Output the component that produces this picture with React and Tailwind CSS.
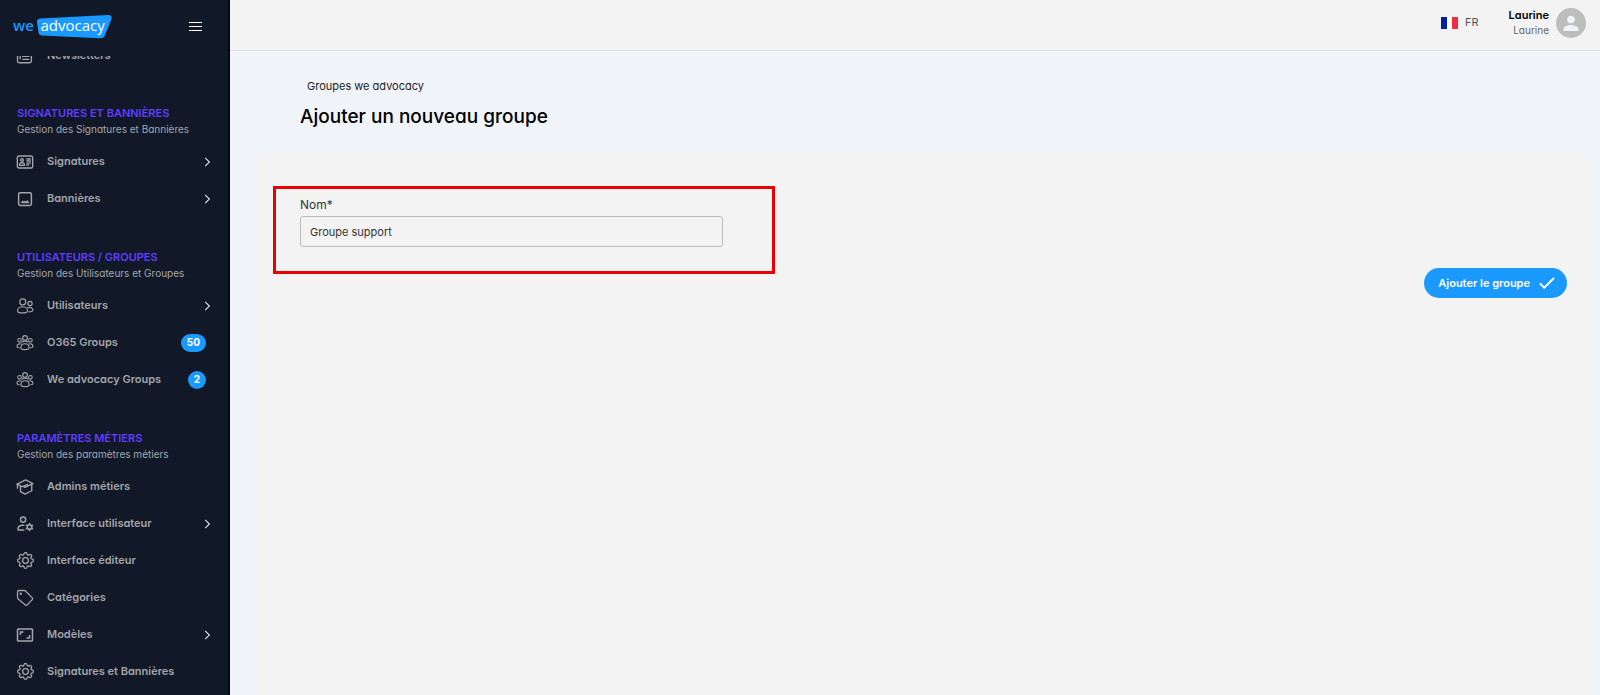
import { useState } from "react";
import { BsGear } from "react-icons/bs";
import { MdOutlineAspectRatio } from "react-icons/md";

function Stroke({ children, width = 1.5 }) {
  return (
    <svg viewBox="0 0 24 24" className="size-[18px]" fill="none" stroke="currentColor" strokeWidth={width} strokeLinecap="round" strokeLinejoin="round" aria-hidden="true">
      {children}
    </svg>
  );
}

const IdCard = () => (
  <Stroke width={1.8}>
    <rect x="1.8" y="4" width="20.4" height="16" rx="2" />
    <circle cx="8" cy="9.3" r="1.8" />
    <path d="M4.8 16.5v-.8c0-1.8 1.2-2.7 3.2-2.7s3.2.9 3.2 2.7v.8z" />
    <path d="M14.5 8h4.6M14.5 10.7h4.6M14.5 13.4h4.6M14.5 16h2.4" />
  </Stroke>
);

const Picture = () => (
  <Stroke width={2}>
    <rect x="3.5" y="3.5" width="17" height="17" rx="1.8" />
    <path d="M6.5 17.3l2.3-3.2 1.8 1.6 1.2-1.4 1.4 1.5 2-2.4 2.3 3.9z" fill="currentColor" strokeWidth=".4" />
  </Stroke>
);

const TwoUsers = () => (
  <Stroke width={1.6}>
    <circle cx="9" cy="6.5" r="4" />
    <circle cx="18.7" cy="8.7" r="2.8" />
    <path d="M2 18.2c0-3 3-5.2 6.7-5.2s6.7 2.2 6.7 5.2c0 2-1.6 3-6.7 3s-6.7-1-6.7-3z" />
    <path d="M15.500 14.400c3.600-1.400 7 .5 7 3 0 1.700-1.500 2.400-5.200 2.400" />
  </Stroke>
);

const ThreeUsers = () => (
  <Stroke width={1.5}>
    <circle cx="12" cy="5.3" r="3.100" />
    <circle cx="4.800" cy="8.400" r="2.400" />
    <circle cx="19.200" cy="8.400" r="2.400" />
    <path d="M6.500 18.300c0-3.200 2.300-5.300 5.500-5.300s5.500 2.100 5.500 5.300c0 1.800-1.500 2.600-5.500 2.600s-5.500-.8-5.500-2.600z" />
    <path d="M8 10.800c1-1 2.400-1.300 4-1.300s3 .3 4 1.300" />
    <path d="M6.800 13.300c-3-.8-5.500.7-5.500 3 0 1.300 1 2 3 2.100M17.200 13.300c3-.8 5.500.7 5.500 3 0 1.300-1 2-3 2.100" />
  </Stroke>
);

const Cap = () => (
  <Stroke width={1.8}>
    <path d="M1.500 8.200L13 2.500l9.500 5-10.500 5-2.500-1.300 6-2.700" />
    <path d="M1.500 8.200l4.500 2v8l6 3.300 9-4.500V8.500" />
    <path d="M2 8.500v5M6 11.500l3.500-.3" />
  </Stroke>
);

const UserCog = () => (
  <Stroke width={2}>
    <circle cx="9.500" cy="6" r="3.500" />
    <path d="M10.500 20H2.800v-2c0-2.800 2.700-4.500 6.700-4.500h1" />
    <circle cx="18" cy="16" r="3.100" />
    <path d="M18 11.300v1.400M18 19.300v1.400M13.900 13.600l1.300.8M20.800 17.600l1.300.8M13.900 18.400l1.300-.8M20.800 14.400l1.300-.8" />
  </Stroke>
);

const News = () => (
  <Stroke width={1.8}>
    <path d="M5.500 15.500V4h15v14.500a2.500 2.500 0 0 1-2.500 2.500H4.500A2.500 2.500 0 0 1 2 18.500V9h3.500" />
    <path d="M9 8.500h8M9 12.500h8M9 16.500h8" />
  </Stroke>
);

const Tag = () => (
  <Stroke width={1.7}>
    <path d="M2 3.500A1.500 1.500 0 0 1 3.500 2H11q1 0 1.700.7l9 9.200q1 1.100 0 2.200l-7 7.200q-1.100 1-2.200 0L2.700 13Q2 12.300 2 11.300z" />
    <circle cx="6.300" cy="6.300" r=".8" />
  </Stroke>
);

const Gear = () => <BsGear className="size-[17px]" stroke="currentColor" strokeWidth=".3" aria-hidden="true" />;
const Ratio = () => <MdOutlineAspectRatio className="size-[18px]" aria-hidden="true" />;

const sections = [
  { items: [{ label: "Newsletters", icon: News }] },
  {
    title: "Signatures et Bannières",
    text: "Gestion des Signatures et Bannières",
    items: [
      { label: "Signatures", icon: IdCard, more: true },
      { label: "Bannières", icon: Picture, more: true },
    ],
  },
  {
    title: "Utilisateurs / Groupes",
    text: "Gestion des Utilisateurs et Groupes",
    items: [
      { label: "Utilisateurs", icon: TwoUsers, more: true },
      { label: "O365 Groups", icon: ThreeUsers, badge: 50 },
      { label: "We advocacy Groups", icon: ThreeUsers, badge: 2 },
    ],
  },
  {
    title: "Paramètres métiers",
    text: "Gestion des paramètres métiers",
    items: [
      { label: "Admins métiers", icon: Cap },
      { label: "Interface utilisateur", icon: UserCog, more: true },
      { label: "Interface éditeur", icon: Gear },
      { label: "Catégories", icon: Tag },
      { label: "Modèles", icon: Ratio, more: true },
      { label: "Signatures et Bannières", icon: Gear },
    ],
  },
];

function NavItem({ label, icon: Icon, more, badge }) {
  return (
    <li>
      <a href="#" className="flex h-[37px] items-center pr-[17px] pl-4 text-[11px] font-semibold text-[#a3a5aa]">
        <span className="flex w-[18px] justify-center">
          <Icon />
        </span>
        <span className="ml-[13px] flex-1">{label}</span>
        {more && (
          <svg viewBox="0 0 7 10" className="h-[10px] w-[7px]" fill="none" stroke="#e5e5e5" strokeWidth="1.1" aria-hidden="true">
            <path d="M1.200 .8L5.400 5 1.200 9.200" />
          </svg>
        )}
        {badge && (
          <span className="mr-[5px] flex h-[18px] items-center rounded-full bg-[#1a99ff] px-[6px] text-[10px] font-bold text-white">
            {badge}
          </span>
        )}
      </a>
    </li>
  );
}

function Sidebar() {
  return (
    <aside className="flex w-[230px] shrink-0 flex-col border-r-2 border-[#05070b] bg-[#111827]">
      <div className="flex h-14 shrink-0 items-center justify-between pr-[26px] pb-[3px] pl-[13px]">
        <a href="#" aria-label="we advocacy">
          <svg viewBox="0 0 100 26" className="h-[26px] w-[100px]" fontFamily="'Open Sans', sans-serif" aria-hidden="true">
            <path d="M27 4.500Q23.500 5 24 8.500l1.500 10q.5 3 3.500 3.100l58 2.700q4 .2 5-3.300L98.500 5Q99.500 1 95 1z" fill="#1a99ff" />
            <text x="0" y="17" fill="#1a99ff" fontSize="15" fontWeight="600">we</text>
            <text x="27.500" y="17" fill="#fff" fontSize="15" fontWeight="500">advocacy</text>
          </svg>
        </a>
        <button type="button" aria-label="Menu" className="flex w-[13px] flex-col gap-[3px]">
          <span className="h-px w-full bg-white" />
          <span className="h-px w-full bg-white" />
          <span className="h-px w-full bg-white" />
        </button>
      </div>
      <nav className="min-h-0 flex-1 overflow-hidden">
        <div className="-mt-[19px] flex flex-col gap-8">
          {sections.map((section, i) => (
            <section key={i} className="first:-mb-px">
              {section.title && (
                <div className="px-[17px] pb-[6px]">
                  <h2 className="text-[11px] leading-4 font-semibold text-[#5f3dff] uppercase">{section.title}</h2>
                  <p className="text-[10px] leading-4 text-[#a3a7ad]">{section.text}</p>
                </div>
              )}
              <ul>
                {section.items.map((item) => (
                  <NavItem key={item.label} {...item} />
                ))}
              </ul>
            </section>
          ))}
        </div>
      </nav>
    </aside>
  );
}

function Header() {
  return (
    <header className="flex h-[51px] shrink-0 items-center justify-end border-b border-[#dfe1e4] bg-[#f3f3f3] pr-[14px] pb-[5px]">
      <button type="button" className="mr-[30px] flex items-center gap-[7px] text-[11px] text-[#555]">
        <svg viewBox="0 0 17 12" className="h-3 w-[17px]" aria-hidden="true">
          <path d="M0 0h6v12H0z" fill="#00209f" />
          <path d="M6 0h5v12H6z" fill="#fff" />
          <path d="M11 0h6v12h-6z" fill="#f42a41" />
        </svg>
        FR
      </button>
      <div className="mr-[7px] text-right">
        <p className="text-[11px] leading-[15px] font-semibold text-black">Laurine</p>
        <p className="text-[10px] leading-[15px] text-[#666]">Laurine</p>
      </div>
      <svg viewBox="0 0 30 30" className="size-[30px]" role="img" aria-label="Laurine">
        <circle cx="15" cy="15" r="15" fill="#bdbdbd" />
        <circle cx="15" cy="11.500" r="3.800" fill="#f0f4f9" />
        <path d="M7.500 23v-2c0-2.700 5-4 7.500-4s7.500 1.300 7.500 4v2z" fill="#f0f4f9" />
      </svg>
    </header>
  );
}

export default function App() {
  const [name, setName] = useState("Groupe support");
  return (
    <div className="flex h-screen overflow-hidden bg-[#f0f4f9] font-['Inter','Liberation_Sans',sans-serif] [font-feature-settings:'cv11']">
      <Sidebar />
      <div className="flex min-w-0 flex-1 flex-col">
        <Header />
        <main className="flex flex-1 flex-col pr-[14px] pl-7">
          <div className="h-[103px] shrink-0 pt-[27px] pl-[42px]">
            <a href="#" className="ml-[7px] block text-[11px] leading-4 text-[#222]">Groupes we advocacy</a>
            <h1 className="mt-[9px] text-[19px] leading-7 font-medium text-black">Ajouter un nouveau groupe</h1>
          </div>
          <form className="flex-1 bg-[#f3f3f3] px-[15px] pt-8" onSubmit={(e) => e.preventDefault()}>
            <div className="h-[88px] w-[502px] max-w-full border-[3px] border-[#eb0000] px-6 pt-2">
              <label htmlFor="name" className="block pb-[3px] text-[12px] leading-4 text-[#333]">Nom*</label>
              <input
                id="name"
                value={name}
                onChange={(e) => setName(e.target.value)}
                className="block h-[31px] w-[423px] max-w-full rounded-[3px] border border-[#bcbcbc] bg-transparent px-[9px] text-[11px] text-[#333] outline-none"
              />
            </div>
            <div className="flex justify-end pr-1">
              <button type="submit" className="-mt-[6px] flex h-[30px] items-center gap-[9px] rounded-full bg-[#1a99ff] pr-3 pl-[14px] text-[11px] font-semibold text-white">
                Ajouter le groupe
                <svg viewBox="0 0 16 12" className="h-3 w-4" fill="none" stroke="currentColor" strokeWidth="2" aria-hidden="true">
                  <path d="M1 6.500l4.200 4.200L15 1" />
                </svg>
              </button>
            </div>
          </form>
        </main>
      </div>
    </div>
  );
}
